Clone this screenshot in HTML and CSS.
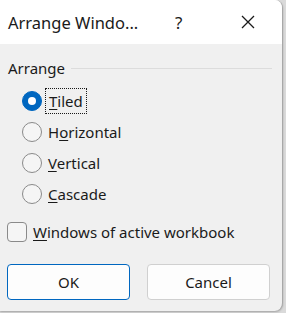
FILE: index.html
```html
<!DOCTYPE html>
<html lang="en">
  <head>
    <meta charset="UTF-8" />
    <meta name="viewport" content="width=device-width, initial-scale=1.0" />
    <title>Arrange Windows</title>
    <link rel="stylesheet" href="styles.css">
  </head>
  <body>
    <div class="dialog">
      <div class="titlebar">
        <span class="title">Arrange Windo...</span>
        <span class="help">?</span>
        <span class="close">
          <svg width="14" height="14" viewBox="0 0 14 14">
            <path d="M1 1 L13 13 M13 1 L1 13" stroke="#1a1a1a" stroke-width="1.3" fill="none" />
          </svg>
        </span>
      </div>

      <div class="content">
        <div class="group-header">
          <span>Arrange</span>
          <div class="rule"></div>
        </div>

        <div class="options">
          <div class="option">
            <span class="radio checked"></span>
            <span class="label focused"><u>T</u>iled</span>
          </div>
          <div class="option">
            <span class="radio"></span>
            <span class="label">H<u>o</u>rizontal</span>
          </div>
          <div class="option">
            <span class="radio"></span>
            <span class="label"><u>V</u>ertical</span>
          </div>
          <div class="option">
            <span class="radio"></span>
            <span class="label"><u>C</u>ascade</span>
          </div>
        </div>

        <div class="check-row">
          <span class="checkbox"></span>
          <span class="label"><u>W</u>indows of active workbook</span>
        </div>

        <div class="buttons">
          <button class="btn primary">OK</button>
          <button class="btn">Cancel</button>
        </div>
      </div>
    </div>
  </body>
</html>
```

FILE: styles.css
```css
body {
  margin: 0;
  background: #dadada;
  font-family: "Noto Sans", "Open Sans", sans-serif;
  color: #1a1a1a;
  height: 313px;
  overflow: hidden;
}

.dialog {
  width: 282px;
  height: 311px;
  background: #f0f0f0;
  border-right: 1px solid #a8a8a8;
  border-radius: 0 8px 8px 0;
  box-shadow: 0 1px 2px rgba(0, 0, 0, 0.25);
  overflow: hidden;
}

.titlebar {
  height: 44px;
  background: #ffffff;
  display: flex;
  align-items: center;
  padding-left: 8px;
  font-size: 16.5px;
}

.title {
  width: 167px;
  white-space: nowrap;
}

.help {
  width: 66px;
  font-size: 17px;
}

.close {
  display: flex;
  align-items: center;
}

.content {
  padding: 14px 10px 0 7px;
  font-size: 15px;
}

.group-header {
  display: flex;
  align-items: center;
  height: 20px;
  padding-left: 1px;
}

.group-header .rule {
  flex: 1;
  height: 1px;
  background: #dcdcdc;
  margin-left: 6px;
}

.options {
  padding-top: 7px;
  padding-left: 15px;
}

.option {
  display: flex;
  align-items: center;
  height: 31px;
}

.radio {
  width: 18px;
  height: 18px;
  border: 1px solid #8a8a8a;
  border-radius: 50%;
  background: #f5f5f5;
  box-sizing: content-box;
  margin-right: 6px;
  position: relative;
}

.radio.checked {
  background: #0067c0;
  border-color: #0067c0;
}

.radio.checked::after {
  content: "";
  position: absolute;
  left: 5px;
  top: 5px;
  width: 8px;
  height: 8px;
  border-radius: 50%;
  background: #ffffff;
}

.label u {
  text-decoration-thickness: 1px;
  text-underline-offset: 2px;
}

.label.focused {
  outline: 1px dotted #1a1a1a;
  outline-offset: 2px;
  padding: 0 1px;
}

.check-row {
  display: flex;
  align-items: center;
  height: 20px;
  margin-top: 13px;
}

.checkbox {
  width: 18px;
  height: 18px;
  border: 1px solid #8a8a8a;
  border-radius: 4px;
  background: #f5f5f5;
  margin-right: 6px;
}

.buttons {
  display: flex;
  gap: 17px;
  margin-top: 22px;
}

.btn {
  width: 123px;
  height: 36px;
  background: #fdfdfd;
  border: 1px solid #d0d0d0;
  border-radius: 4px;
  font-family: inherit;
  font-size: 15px;
  color: #1a1a1a;
  padding: 0;
}

.btn.primary {
  border-color: #0067c0;
}
```
